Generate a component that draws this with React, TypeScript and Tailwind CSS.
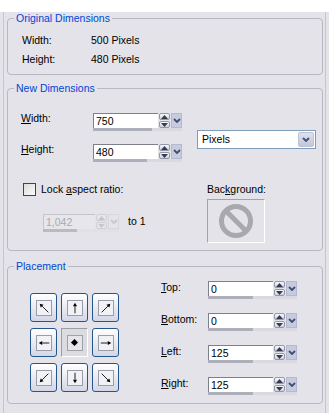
import React from "react";

// mnemonic letter
function U({ children }: { children: React.ReactNode }) {
  return <span className="underline underline-offset-[1px]">{children}</span>;
}

function Tri({ up, color }: { up?: boolean; color: string }) {
  return (
    <svg width="7" height="4" viewBox="0 0 7 4">
      <path d={up ? "M0 4 L3.5 0 L7 4Z" : "M0 0 L3.5 4 L7 0Z"} fill={color} />
    </svg>
  );
}

function Chevron({ color }: { color: string }) {
  return (
    <svg width="8" height="5" viewBox="0 0 8 5">
      <path d="M1 1 L4 4 L7 1" fill="none" stroke={color} strokeWidth="1.8" />
    </svg>
  );
}

function Spinner({ disabled }: { disabled?: boolean }) {
  const c = disabled ? "#c6c6cc" : "#363c4a";
  const btn = disabled
    ? "border-[#d0d0d6] bg-[#e6e6ea]"
    : "border-[#9297ab] bg-linear-to-b from-[#fafafc] to-[#cfd2de]";
  return (
    <div className="flex h-full w-[11px] flex-col gap-px">
      <div className={`flex flex-1 items-center justify-center rounded-[2px] border ${btn}`}>
        <Tri up color={c} />
      </div>
      <div className={`flex flex-1 items-center justify-center rounded-[2px] border ${btn}`}>
        <Tri color={c} />
      </div>
    </div>
  );
}

function DropBtn({ disabled }: { disabled?: boolean }) {
  return (
    <div
      className={`flex h-full w-[11px] items-center justify-center border ${
        disabled ? "border-[#d6d6dc] bg-[#e4e4e9]" : "border-[#b4b9cf] bg-[#c7cbdd]"
      }`}
    >
      <Chevron color={disabled ? "#c8c8ce" : "#3f4f72"} />
    </div>
  );
}

function SpinBox({
  value,
  boxClass,
  fill,
  disabled,
}: {
  value: string;
  boxClass: string;
  fill: number;
  disabled?: boolean;
}) {
  return (
    <div className="flex flex-col">
      <div className="flex h-[15px] gap-px">
        <div
          className={`${boxClass} h-full border-t border-l pl-[2px] leading-[14px] ${
            disabled ? "border-[#c4c4cc] bg-[#e6e6eb] text-[#a9a9b0]" : "border-[#7d7f8c] bg-white text-black"
          }`}
        >
          {value}
        </div>
        <Spinner disabled={disabled} />
        <DropBtn disabled={disabled} />
      </div>
      <div className={`flex h-[3px] ${disabled ? "bg-[#e0e0e5]" : "bg-[#d9d9df]"}`}>
        <div className={`h-full ${disabled ? "bg-[#b9bac2]" : "bg-[#adafbb]"}`} style={{ width: fill }} />
      </div>
    </div>
  );
}

function Group({
  title,
  className,
  children,
}: {
  title: string;
  className?: string;
  children: React.ReactNode;
}) {
  return (
    <fieldset className={`ml-[3px] w-[316px] rounded-[4px] border border-[#b8b8c3] ${className ?? ""}`}>
      <legend className="ml-[6px] px-[2px] leading-[13px] text-[#0046d5]">{title}</legend>
      {children}
    </fieldset>
  );
}

// small arrow inside a 16x16 box
function Arrow({ angle, len }: { angle: number; len: number }) {
  const r = (angle * Math.PI) / 180;
  const dx = Math.sin(r);
  const dy = -Math.cos(r);
  const tx = 8 + (dx * len) / 2;
  const ty = 8 + (dy * len) / 2;
  const sx = 8 - (dx * len) / 2;
  const sy = 8 - (dy * len) / 2;
  const bx = tx - dx * 4;
  const by = ty - dy * 4;
  const px = -dy * 2.3;
  const py = dx * 2.3;
  return (
    <svg width="16" height="16" viewBox="0 0 16 16">
      <line x1={sx} y1={sy} x2={bx} y2={by} stroke="#000" strokeWidth="1" />
      <path d={`M${tx} ${ty} L${bx + px} ${by + py} L${bx - px} ${by - py}Z`} fill="#000" />
    </svg>
  );
}

function PlaceBtn({ angle, len }: { angle: number; len: number }) {
  return (
    <div className="flex h-[29px] w-[27px] items-center justify-center rounded-[3px] border border-[#24558c] bg-linear-to-b from-[#ffffff] to-[#d3d7e5]">
      <div className="flex h-[16px] w-[16px] items-center justify-center border border-[#9a9ca8] bg-[#f2f2f6]">
        <Arrow angle={angle} len={len} />
      </div>
    </div>
  );
}

function CenterBtn() {
  return (
    <div className="flex h-[29px] w-[27px] items-center justify-center border border-t-[#9d9da6] border-l-[#9d9da6] border-r-white border-b-white bg-[#dcdce0]">
      <div className="flex h-[16px] w-[16px] items-center justify-center border border-[#a0a0a8] bg-[#e6e6ea]">
        <div className="h-[5px] w-[5px] rotate-45 bg-black" />
      </div>
    </div>
  );
}

function Prohibit() {
  return (
    <svg width="36" height="36" viewBox="0 0 36 36">
      <circle cx="18" cy="18" r="14.5" fill="none" stroke="#a9a9ad" strokeWidth="5" />
      <line x1="8" y1="8" x2="28" y2="28" stroke="#a9a9ad" strokeWidth="5" />
    </svg>
  );
}

const margins = [
  { label: "Top:", key: "T", rest: "op:", value: "0" },
  { label: "Bottom:", key: "B", rest: "ottom:", value: "0" },
  { label: "Left:", key: "L", rest: "eft:", value: "125" },
  { label: "Right:", key: "R", rest: "ight:", value: "125" },
];

export default function App() {
  return (
    <div className="h-[413px] w-[329px] bg-[#e3e3e9] font-['Liberation_Sans',Arial,sans-serif] text-[10.5px] text-black">
      <div className="ml-[3px] h-[409px] w-[323px] border-x border-b border-[#c6c6ce]">
        {/* Original Dimensions */}
        <Group title="Original Dimensions" className="mt-[12px] pt-[6px] pb-[5px]">
          <div className="flex pl-[14px] leading-[19px]">
            <span className="w-[69px]">Width:</span>
            <span>500 Pixels</span>
          </div>
          <div className="flex pl-[14px] leading-[19px]">
            <span className="w-[69px]">Height:</span>
            <span>480 Pixels</span>
          </div>
        </Group>

        {/* New Dimensions */}
        <Group title="New Dimensions" className="mt-[7px] h-[169px]">
          <div className="flex">
            <div className="w-[189px] pl-[13px]">
              <div className="mt-[18px] flex items-start">
                <span className="w-[72px] leading-[11px]">
                  <U>W</U>idth:
                </span>
                <SpinBox value="750" boxClass="w-[65px]" fill={59} />
              </div>
              <div className="mt-[13px] flex items-start">
                <span className="w-[72px] leading-[11px]">
                  <U>H</U>eight:
                </span>
                <SpinBox value="480" boxClass="w-[65px]" fill={54} />
              </div>
              <div className="mt-[21px] flex items-center gap-[5px] pl-[2px]">
                <div className="h-[13px] w-[13px] border border-[#1f4c7c] bg-linear-to-br from-[#dcdcd8] to-[#fbfbfb]" />
                <span className="leading-[13px]">
                  Lock <U>a</U>spect ratio:
                </span>
              </div>
              <div className="mt-[18px] ml-[22px] flex items-start">
                <SpinBox value="1,042" boxClass="w-[52px]" fill={34} disabled />
                <span className="ml-[9px] leading-[14px]">to 1</span>
              </div>
            </div>
            <div className="flex flex-col">
              <div className="mt-[35px] flex h-[19px] w-[119px] items-center border border-[#7f9db9] bg-white p-px">
                <span className="flex-1 pl-[3px] leading-[15px]">Pixels</span>
                <div className="flex h-full w-[16px] items-center justify-center rounded-[2px] border border-[#bcc2d6] bg-linear-to-b from-[#dfe2ee] to-[#c2c6d9]">
                  <Chevron color="#3f4f72" />
                </div>
              </div>
              <span className="mt-[34px] ml-[10px] leading-[13px]">
                Bac<U>k</U>ground:
              </span>
              <div className="mt-[3px] ml-[10px] flex h-[44px] w-[58px] items-center justify-center border border-t-[#a2a2ac] border-l-[#a2a2ac] border-r-white border-b-white">
                <Prohibit />
              </div>
            </div>
          </div>
        </Group>

        {/* Placement */}
        <Group title="Placement" className="mt-[9px] h-[144px]">
          <div className="flex">
            <div className="grid grid-cols-[27px_27px_27px] gap-x-[4px] gap-y-[3px] pt-[20px] pl-[22px]">
              <PlaceBtn angle={-45} len={14} />
              <PlaceBtn angle={0} len={12} />
              <PlaceBtn angle={45} len={14} />
              <PlaceBtn angle={-90} len={12} />
              <CenterBtn />
              <PlaceBtn angle={90} len={12} />
              <PlaceBtn angle={-135} len={14} />
              <PlaceBtn angle={180} len={12} />
              <PlaceBtn angle={135} len={14} />
            </div>
            <div className="ml-[42px] flex flex-col gap-[14px] pt-[8px]">
              {margins.map((m) => (
                <div key={m.label} className="flex items-start">
                  <span className="w-[47px] leading-[13px]">
                    <U>{m.key}</U>
                    {m.rest}
                  </span>
                  <SpinBox value={m.value} boxClass="w-[65px]" fill={45} />
                </div>
              ))}
            </div>
          </div>
        </Group>
      </div>
    </div>
  );
}
